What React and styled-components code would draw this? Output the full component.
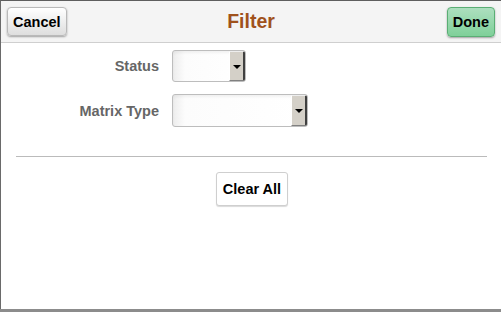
import React from "react";
import styled, { createGlobalStyle } from "styled-components";

const Global = createGlobalStyle`
  html, body {
    margin: 0;
    padding: 0;
    background: #8c8c8c;
    font-family: "Liberation Sans", Arial, sans-serif;
  }
`;

const Dialog = styled.div`
  width: 500px;
  height: 308px;
  background: #fff;
  border-top: 1px solid #5e5e5e;
  border-left: 1px solid #6a6a6a;
  box-shadow: 0 1px 0 #6e6e6e;
  display: flex;
  flex-direction: column;
`;

const Header = styled.div`
  height: 41px;
  background: #f4f4f4;
  border-bottom: 1px solid #cfcfcf;
  display: grid;
  grid-template-columns: 1fr auto 1fr;
  align-items: center;
  padding: 0 6px;
`;

const Title = styled.h1`
  margin: 0;
  font-size: 19.5px;
  font-weight: bold;
  color: #a0521c;
`;

const HeaderButton = styled.button`
  justify-self: ${(p) => (p.$right ? "end" : "start")};
  height: ${(p) => (p.$right ? "30px" : "29px")};
  padding: 0 5px;
  font-family: inherit;
  font-size: 14.5px;
  font-weight: bold;
  color: #000;
  white-space: nowrap;
  border-radius: 4px;
  border: 1px solid ${(p) => (p.$primary ? "#5aae74" : "#b9b9b9")};
  background: ${(p) =>
    p.$primary
      ? "linear-gradient(#addfbf, #7fd099)"
      : "linear-gradient(#ffffff, #dedede)"};
  box-shadow: 0 1px 2px rgba(0, 0, 0, 0.35);
`;

const Form = styled.div`
  display: grid;
  grid-template-columns: 158px auto;
  column-gap: 13px;
  row-gap: 12px;
  align-items: center;
  margin-top: 7px;
`;

const Label = styled.label`
  text-align: right;
  font-size: 14.5px;
  font-weight: bold;
  color: #666;
`;

const SelectBox = styled.div`
  width: ${(p) => p.$w}px;
  height: ${(p) => p.$h}px;
  box-sizing: border-box;
  border: 1px solid #bdbdbd;
  border-radius: 3px;
  background: linear-gradient(90deg, #ededed, #fcfcfc 12px, #fff);
  box-shadow: inset 0 2px 3px rgba(0, 0, 0, 0.05);
  display: flex;
  justify-content: flex-end;
  overflow: hidden;
`;

const ArrowButton = styled.span`
  width: 16px;
  box-sizing: border-box;
  background: #d4d0c8;
  border-left: 1px solid #fff;
  border-top: 1px solid #eee;
  border-right: 2px solid #404040;
  border-bottom: 1px solid #808080;
  display: flex;
  align-items: center;
  justify-content: center;
`;

const Triangle = styled.span`
  width: 0;
  height: 0;
  border-left: 4px solid transparent;
  border-right: 4px solid transparent;
  border-top: 4px solid #000;
  margin-top: 1px;
`;

const Divider = styled.hr`
  margin: 29px 14px 0 15px;
  border: 0;
  border-top: 1px solid #bbb;
`;

const Footer = styled.div`
  display: flex;
  justify-content: center;
  padding-top: 15px;
`;

const ClearButton = styled.button`
  height: 34px;
  padding: 0 6px;
  white-space: nowrap;
  font-family: inherit;
  font-size: 14.5px;
  font-weight: bold;
  color: #000;
  background: #fff;
  border: 1px solid #cfcfcf;
  border-radius: 3px;
  box-shadow: 0 1px 1px rgba(0, 0, 0, 0.15);
  margin-left: 2px;
`;

function Select({ w, h }) {
  return (
    <SelectBox $w={w} $h={h}>
      <ArrowButton>
        <Triangle />
      </ArrowButton>
    </SelectBox>
  );
}

export default function App() {
  return (
    <>
      <Global />
      <Dialog>
        <Header>
          <HeaderButton>Cancel</HeaderButton>
          <Title>Filter</Title>
          <HeaderButton $right $primary>Done</HeaderButton>
        </Header>
        <Form>
          <Label>Status</Label>
          <Select w={74} h={32} />
          <Label>Matrix Type</Label>
          <Select w={136} h={33} />
        </Form>
        <Divider />
        <Footer>
          <ClearButton>Clear All</ClearButton>
        </Footer>
      </Dialog>
    </>
  );
}
